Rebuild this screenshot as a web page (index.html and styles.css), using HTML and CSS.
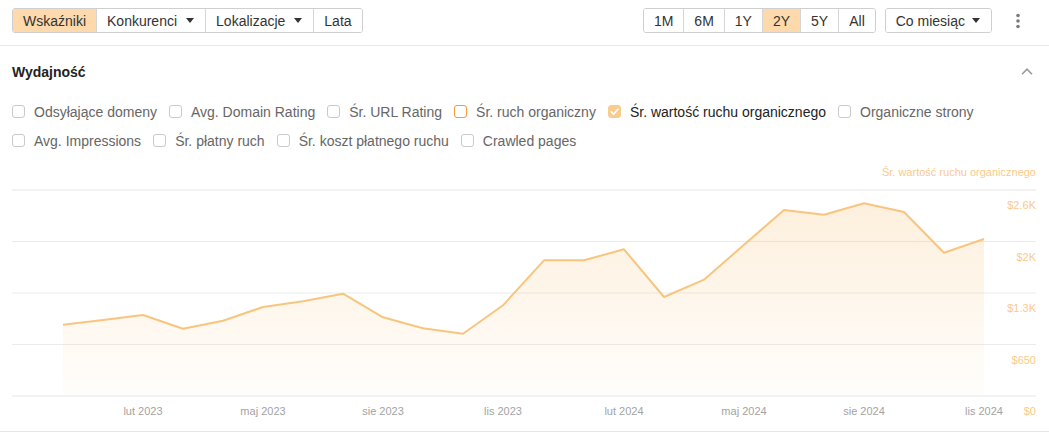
FILE: index.html
```html
<!DOCTYPE html>
<html lang="pl">
<head>
<meta charset="utf-8">
<title>Wydajność</title>
<link rel="stylesheet" href="styles.css">
</head>
<body>
<div class="toolbar">
  <div class="btn-group">
    <button class="btn active">Wskaźniki</button>
    <button class="btn drop">Konkurenci<svg class="caret" viewBox="0 0 8 5"><path d="M0 0h8L4 5z"/></svg></button>
    <button class="btn drop">Lokalizacje<svg class="caret" viewBox="0 0 8 5"><path d="M0 0h8L4 5z"/></svg></button>
    <button class="btn">Lata</button>
  </div>
  <div class="right">
    <div class="btn-group">
      <button class="btn">1M</button>
      <button class="btn">6M</button>
      <button class="btn">1Y</button>
      <button class="btn active">2Y</button>
      <button class="btn">5Y</button>
      <button class="btn">All</button>
    </div>
    <div class="btn-group">
      <button class="btn drop period">Co miesiąc<svg class="caret" viewBox="0 0 8 5"><path d="M0 0h8L4 5z"/></svg></button>
    </div>
    <button class="kebab" aria-label="więcej"><svg viewBox="0 0 4 16" width="4" height="16"><circle cx="2" cy="2.5" r="1.8"/><circle cx="2" cy="8" r="1.8"/><circle cx="2" cy="13.5" r="1.8"/></svg></button>
  </div>
</div>

<div class="section-head">
  <span class="title">Wydajność</span>
  <svg class="chevron" viewBox="0 0 12 7" width="12" height="7"><path d="M1 6.2L6 1.2L11 6.2"/></svg>
</div>

<div class="metrics">
  <label class="metric"><span class="box"></span>Odsyłające domeny</label>
  <label class="metric"><span class="box"></span>Avg. Domain Rating</label>
  <label class="metric"><span class="box"></span>Śr. URL Rating</label>
  <label class="metric"><span class="box orange"></span>Śr. ruch organiczny</label>
  <label class="metric on"><span class="box checked"><svg viewBox="0 0 13 13" width="13" height="13"><path d="M3.2 6.8L5.6 9.1L9.9 4.2"/></svg></span>Śr. wartość ruchu organicznego</label>
  <label class="metric"><span class="box"></span>Organiczne strony</label>
  <label class="metric"><span class="box"></span>Avg. Impressions</label>
  <label class="metric"><span class="box"></span>Śr. płatny ruch</label>
  <label class="metric"><span class="box"></span>Śr. koszt płatnego ruchu</label>
  <label class="metric"><span class="box"></span>Crawled pages</label>
</div>

<div class="chart">
  <svg class="plot" viewBox="12 155 1024 276" width="1024" height="276">
    <defs>
      <linearGradient id="fillg" x1="0" y1="200" x2="0" y2="396" gradientUnits="userSpaceOnUse">
        <stop offset="0" stop-color="#f9c682" stop-opacity="0.28"/>
        <stop offset="1" stop-color="#f9c682" stop-opacity="0.03"/>
      </linearGradient>
    </defs>
    <text class="series" x="1036" y="176">Śr. wartość ruchu organicznego</text>
    <line class="grid edge" x1="12" y1="190" x2="1036" y2="190"/>
    <line class="grid" x1="12" y1="241.5" x2="1036" y2="241.5"/>
    <line class="grid" x1="12" y1="293" x2="1036" y2="293"/>
    <line class="grid" x1="12" y1="344.5" x2="1036" y2="344.5"/>
    <line class="grid edge" x1="12" y1="396" x2="1036" y2="396"/>
    <polygon class="area" points="63,396 63,324.7 103,320 143,315 183,328.7 223,320.7 263,307 303,301.3 343,293.7 383,317.3 423,328.3 463,333.7 503,305.3 544,260.3 584,260.3 624,249.3 664,297 704,279.7 744,244.8 784,210 824,214.7 864,203.3 904,212 944,252.7 984,239 984,396"/>
    <polyline class="line" points="63,324.7 103,320 143,315 183,328.7 223,320.7 263,307 303,301.3 343,293.7 383,317.3 423,328.3 463,333.7 503,305.3 544,260.3 584,260.3 624,249.3 664,297 704,279.7 744,244.8 784,210 824,214.7 864,203.3 904,212 944,252.7 984,239"/>
    <text class="ylab" x="1036" y="209">$2.6K</text>
    <text class="ylab" x="1036" y="261">$2K</text>
    <text class="ylab" x="1036" y="312">$1.3K</text>
    <text class="ylab" x="1036" y="364">$650</text>
    <text class="ylab" x="1036" y="415">$0</text>
    <text class="xlab" x="143" y="415">lut 2023</text>
    <text class="xlab" x="263" y="415">maj 2023</text>
    <text class="xlab" x="383" y="415">sie 2023</text>
    <text class="xlab" x="503" y="415">lis 2023</text>
    <text class="xlab" x="624" y="415">lut 2024</text>
    <text class="xlab" x="744" y="415">maj 2024</text>
    <text class="xlab" x="864" y="415">sie 2024</text>
    <text class="xlab" x="984" y="415">lis 2024</text>
  </svg>
</div>
</body>
</html>
```

FILE: styles.css
```css
* { box-sizing: border-box; }

body {
  margin: 0;
  width: 1049px;
  background: #fff;
  color: #333;
  font-family: "Liberation Sans", Arial, sans-serif;
  font-size: 14px;
}

.toolbar {
  display: flex;
  justify-content: space-between;
  align-items: center;
  padding: 8px 21px 12px 12px;
  border-bottom: 1px solid #e8e8e8;
}

.right {
  display: flex;
  align-items: center;
  gap: 9px;
}

.btn-group {
  display: flex;
  height: 25px;
  border: 1px solid #cfcfcf;
  border-radius: 3px;
  overflow: hidden;
}

.btn {
  display: flex;
  align-items: center;
  height: 100%;
  margin: 0;
  padding: 0 10px;
  border: 0;
  border-left: 1px solid #d6d6d6;
  background: #fff;
  color: #333;
  font-family: inherit;
  font-size: 14px;
  line-height: 1;
  cursor: pointer;
}

.btn:first-child { border-left: 0; }

.btn.active { background: #fdd9ab; }

.btn.drop { padding-right: 11px; }
.btn.period { padding-right: 11px; }

.caret {
  width: 8px;
  height: 5px;
  margin-left: 9px;
  fill: #333;
}

.period .caret { margin-left: 7px; }

.kebab {
  display: flex;
  align-items: center;
  justify-content: center;
  width: 20px;
  height: 25px;
  margin-left: 7px;
  padding: 0;
  border: 0;
  background: none;
  fill: #7a7a7a;
}

.section-head {
  display: flex;
  justify-content: space-between;
  align-items: center;
  height: 51px;
  padding: 0 16px 0 12px;
}

.title {
  font-weight: bold;
  color: #222;
}

.chevron {
  fill: none;
  stroke: #9a9a9a;
  stroke-width: 1.6;
}

.metrics {
  display: flex;
  flex-wrap: wrap;
  column-gap: 12px;
  padding: 0 12px;
}

.metric {
  display: flex;
  align-items: center;
  height: 29px;
  color: #666;
  white-space: nowrap;
}

.metric.on { color: #222; }

.box {
  display: flex;
  align-items: center;
  justify-content: center;
  width: 13px;
  height: 13px;
  margin-right: 9px;
  border: 1px solid #cacaca;
  border-radius: 3px;
  background: #fff;
}

.box.orange { border-color: #f29a3d; }

.box.checked {
  border-color: #f9cb8f;
  background: #f9cb8f;
}

.box.checked svg {
  flex: none;
  fill: none;
  stroke: #fff;
  stroke-width: 1.7;
  stroke-linecap: round;
  stroke-linejoin: round;
}

.chart {
  padding: 0 12px;
  border-bottom: 1px solid #e6e6e6;
}

.plot { display: block; }

.grid {
  stroke: #ebebeb;
  stroke-width: 1;
}

.grid.edge {
  stroke: #f2f2f2;
  stroke-width: 2;
}

.area { fill: url(#fillg); }

.line {
  fill: none;
  stroke: #f8c57f;
  stroke-width: 2;
  stroke-linejoin: round;
}

.series,
.ylab,
.xlab {
  font-family: "Liberation Sans", Arial, sans-serif;
  font-size: 11px;
}

.series,
.ylab {
  fill: #fbc98c;
  text-anchor: end;
}

.xlab {
  fill: #a3a3a3;
  text-anchor: middle;
}
```
